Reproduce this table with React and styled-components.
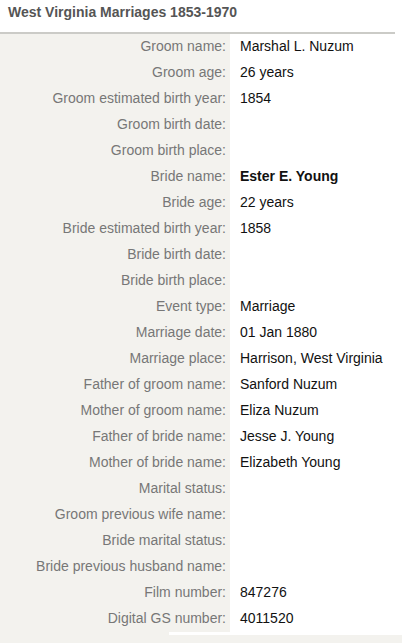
import React from "react";
import styled, {createGlobalStyle} from "styled-components";

const GlobalStyle = createGlobalStyle`
  body {
    margin: 0;
    background: #fff;
    font-family: "Liberation Sans", Arial, sans-serif;
  }
`

const Page = styled.div`
  width: 411px;
  height: 643px;
  overflow: hidden;
`

const Title = styled.h1`
  margin: 0;
  padding: 4px 0 0 8px;
  height: 34px;
  box-sizing: border-box;
  font-size: 14px;
  line-height: 16px;
  font-weight: bold;
  color: #555;
  border-bottom: 2px solid #cbcbc7;
  width: 395px;
`

const Table = styled.div`
  display: grid;
  grid-template-columns: 230px 165px;
`

const Label = styled.div`
  background-color: #f3f2ee;
  color: #777;
  text-align: right;
  font-size: 14px;
  line-height: 16px;
  height: 26px;
  box-sizing: border-box;
  padding: 4px 4px 0 0;
  white-space: nowrap;
`

const Value = styled.div`
  color: #111;
  font-size: 14px;
  line-height: 16px;
  height: 26px;
  box-sizing: border-box;
  padding: 4px 0 0 10px;
  font-weight: ${props => props.bold ? 'bold' : 'normal'};
  white-space: nowrap;
`

const Footer = styled.div`
  width: 402px;
  height: 20px;
  background-color: #f3f2ee;
  display: flex;
`

const FooterStrip = styled.div`
  margin-left: 169px;
  width: 233px;
  height: 3px;
  background-color: #fff;
`

const rows = [
    ["Groom name", "Marshal L. Nuzum"],
    ["Groom age", "26 years"],
    ["Groom estimated birth year", "1854"],
    ["Groom birth date", ""],
    ["Groom birth place", ""],
    ["Bride name", "Ester E. Young", true],
    ["Bride age", "22 years"],
    ["Bride estimated birth year", "1858"],
    ["Bride birth date", ""],
    ["Bride birth place", ""],
    ["Event type", "Marriage"],
    ["Marriage date", "01 Jan 1880"],
    ["Marriage place", "Harrison, West Virginia"],
    ["Father of groom name", "Sanford Nuzum"],
    ["Mother of groom name", "Eliza Nuzum"],
    ["Father of bride name", "Jesse J. Young"],
    ["Mother of bride name", "Elizabeth Young"],
    ["Marital status", ""],
    ["Groom previous wife name", ""],
    ["Bride marital status", ""],
    ["Bride previous husband name", ""],
    ["Film number", "847276"],
    ["Digital GS number", "4011520"],
]

export default function App() {
    return (
        <Page>
            <GlobalStyle/>
            <Title>West Virginia Marriages 1853-1970</Title>
            <Table>
                {rows.map(([label, value, bold]) => (
                    <React.Fragment key={label}>
                        <Label>{label}:</Label>
                        <Value bold={bold}>{value}</Value>
                    </React.Fragment>
                ))}
            </Table>
            <Footer>
                <FooterStrip/>
            </Footer>
        </Page>
    )
}
